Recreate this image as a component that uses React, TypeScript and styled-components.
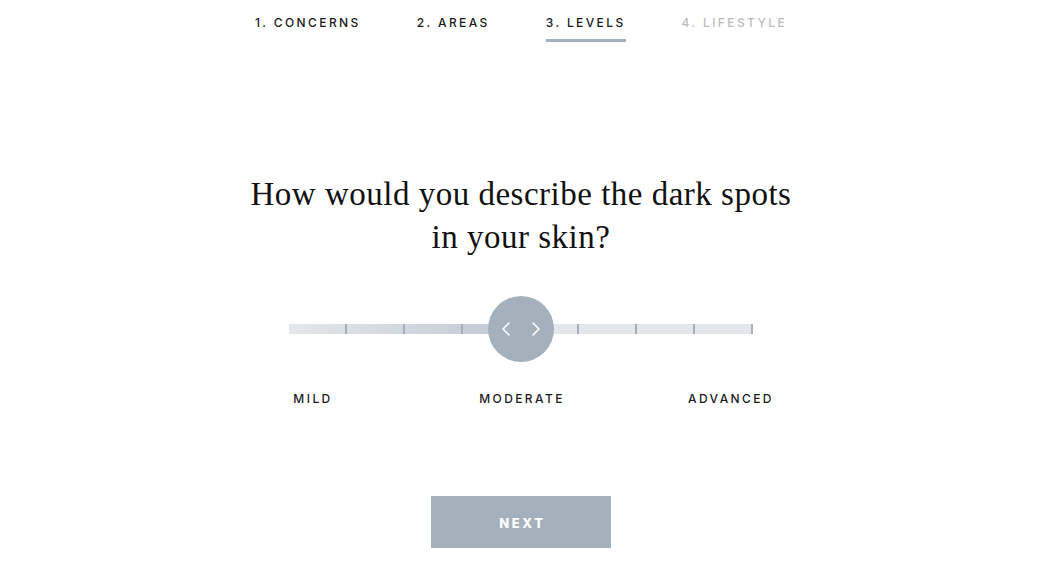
import styled, { createGlobalStyle } from "styled-components";

const GlobalStyle = createGlobalStyle`
  html, body {
    margin: 0;
    padding: 0;
    background: #fff;
  }
  body {
    font-family: Inter, "Liberation Sans", sans-serif;
    color: #1a1a1a;
  }
`;

const Page = styled.div`
  width: 1042px;
  height: 583px;
  display: flex;
  flex-direction: column;
  align-items: center;
  overflow: hidden;
`;

const Steps = styled.nav`
  display: flex;
  gap: 56px;
  padding-top: 16px;
`;

const Step = styled.div<{ $active?: boolean; $disabled?: boolean }>`
  font-size: 12px;
  line-height: 14px;
  font-weight: 500;
  letter-spacing: 2.4px;
  color: ${(p) => (p.$disabled ? "#bcbcbc" : "#1a1a1a")};
  padding-bottom: 9px;
  border-bottom: 3px solid ${(p) => (p.$active ? "#a4b0bc" : "transparent")};
`;

const Title = styled.h1`
  margin: 131px 0 0;
  font-family: "Liberation Serif", "DejaVu Serif", serif;
  font-weight: 400;
  font-size: 33px;
  line-height: 43px;
  text-align: center;
  color: #111;
  letter-spacing: 0.5px;
`;

const SliderWrap = styled.div`
  position: relative;
  width: 464px;
  height: 66px;
  margin-top: 37px;
  display: flex;
  align-items: center;
`;

const Track = styled.div`
  display: flex;
  width: 100%;
  height: 10px;
  background: linear-gradient(
    to right,
    #e4e7eb 0%,
    #bfc8d2 50%,
    #e3e6eb 50%,
    #e3e6eb 100%
  );
`;

const Segment = styled.div`
  flex: 1;
  border-right: 2px solid #a4afbb;
`;

const Knob = styled.button`
  position: absolute;
  top: 0;
  left: 50%;
  transform: translateX(-50%);
  width: 66px;
  height: 66px;
  border-radius: 50%;
  border: none;
  padding: 0;
  background: #a4b0bc;
  display: flex;
  align-items: center;
  justify-content: center;
  gap: 22px;
  cursor: pointer;
`;

const Labels = styled.div`
  display: grid;
  grid-template-columns: repeat(3, 209px);
  margin-top: 30px;
  margin-left: 2px;
`;

const Label = styled.div`
  text-align: center;
  font-size: 12px;
  line-height: 14px;
  font-weight: 500;
  letter-spacing: 2.4px;
  color: #1a1a1a;
`;

const NextButton = styled.button`
  margin-top: 90px;
  width: 180px;
  height: 52px;
  border: none;
  background: #a4b0bc;
  color: #fff;
  font-family: Inter, "Liberation Sans", sans-serif;
  font-weight: 800;
  font-size: 13px;
  letter-spacing: 2.6px;
  padding: 2px 0 0 3px;
  cursor: pointer;
`;

function Chevron({ dir }: { dir: "left" | "right" }) {
  return (
    <svg width="8" height="14" viewBox="0 0 8 14" fill="none">
      <path
        d={dir === "left" ? "M7 1L1 7l6 6" : "M1 1l6 6-6 6"}
        stroke="#fff"
        strokeWidth="1.6"
        strokeLinecap="round"
        strokeLinejoin="round"
      />
    </svg>
  );
}

const steps = [
  { label: "1. CONCERNS" },
  { label: "2. AREAS" },
  { label: "3. LEVELS", active: true },
  { label: "4. LIFESTYLE", disabled: true },
];

export default function App() {
  return (
    <>
      <GlobalStyle />
      <Page>
        <Steps>
          {steps.map((s) => (
            <Step key={s.label} $active={s.active} $disabled={s.disabled}>
              {s.label}
            </Step>
          ))}
        </Steps>
        <Title>
          How would you describe the dark spots
          <br />
          in your skin?
        </Title>
        <SliderWrap>
          <Track>
            {Array.from({ length: 8 }).map((_, i) => (
              <Segment key={i} />
            ))}
          </Track>
          <Knob aria-label="Adjust level">
            <Chevron dir="left" />
            <Chevron dir="right" />
          </Knob>
        </SliderWrap>
        <Labels>
          <Label>MILD</Label>
          <Label>MODERATE</Label>
          <Label>ADVANCED</Label>
        </Labels>
        <NextButton>NEXT</NextButton>
      </Page>
    </>
  );
}
